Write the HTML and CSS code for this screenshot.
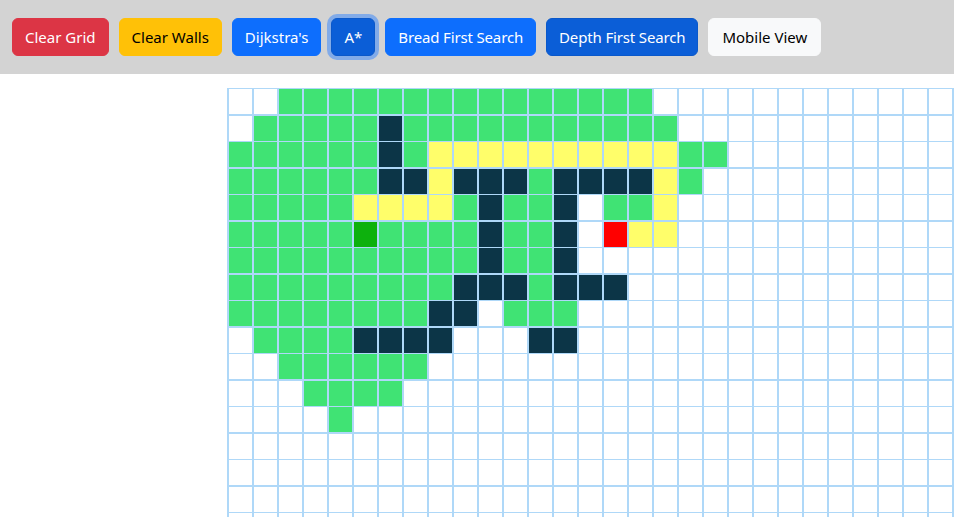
FILE: index.html
```html
<!DOCTYPE html>
<html lang="en">
<head>
<meta charset="utf-8">
<title>Pathfinding Visualizer</title>
<link rel="stylesheet" href="styles.css">
</head>
<body>
<div class="toolbar">
  <button class="btn btn-danger">Clear Grid</button>
  <button class="btn btn-warning">Clear Walls</button>
  <button class="btn btn-primary">Dijkstra's</button>
  <button class="btn btn-primary btn-active">A*</button>
  <button class="btn btn-primary btn-tight">Bread First Search</button>
  <button class="btn btn-primary btn-dark-blue btn-tight">Depth First Search</button>
  <button class="btn btn-light">Mobile View</button>
</div>
<div class="board">
  <div class="grid" id="grid"></div>
</div>
<script src="script.js"></script>
</body>
</html>
```
FILE: styles.css
```css
* { box-sizing: border-box; }
html, body { margin: 0; padding: 0; overflow: hidden; background: #fff; }
body { font-family: "Noto Sans", "Segoe UI", "Liberation Sans", sans-serif; }
.toolbar {
  display: flex;
  gap: 10px;
  align-items: center;
  background: #d3d3d3;
  height: 74px;
  padding: 0 12px;
}
.btn {
  font-family: inherit;
  font-size: 15px;
  line-height: 24px;
  padding: 6px 12px;
  border: 1px solid transparent;
  border-radius: 6px;
  cursor: pointer;
  white-space: nowrap;
}
.btn-tight { letter-spacing: -0.15px; }
.btn-danger { background: #dc3545; border-color: #dc3545; color: #fff; }
.btn-warning { background: #ffc107; border-color: #ffc107; color: #000; }
.btn-primary { background: #0d6efd; border-color: #0d6efd; color: #fff; }
.btn-active { background: #0b5ed7; border-color: #0a58ca; box-shadow: 0 0 0 4px rgba(49,132,253,.5); }
.btn-dark-blue { background: #0b5ed7; border-color: #0a58ca; }
.btn-light { background: #f8f9fa; border-color: #f8f9fa; color: #000; padding: 6px 13px; }
.board {
  padding: 13.5px 0 0 227px;
}
.grid {
  display: grid;
  grid-template-columns: repeat(30, 23.5px);
  grid-auto-rows: 25px;
  gap: 1.5px;
  padding: 1.5px;
  background: #afd8f8;
  width: max-content;
}
.cell { background: #fff; }
.cell.g { background: #40e374; }
.cell.w { background: #0c3547; }
.cell.y { background: #fffe6a; }
.cell.s { background: #0db10d; }
.cell.e { background: #ff0000; }
```
FILE: script.js
```js
var rows = [
  "..ggggggggggggggg.............",
  ".gggggwggggggggggg............",
  "ggggggwgyyyyyyyyyygg..........",
  "ggggggwwywwwgwwwwyg...........",
  "gggggyyyygwggw.ggy............",
  "gggggsggggwggw.eyy............",
  "ggggggggggwggw................",
  "gggggggggwwwgwww..............",
  "ggggggggww.ggg................",
  ".ggggwwww...ww................",
  "..gggggg......................",
  "...gggg.......................",
  "....g.........................",
  "..............................",
  "..............................",
  "..............................",
  ".............................."
];
var grid = document.getElementById("grid");
rows.forEach(function (row) {
  for (var i = 0; i < row.length; i++) {
    var c = document.createElement("div");
    c.className = "cell" + (row[i] === "." ? "" : " " + row[i]);
    grid.appendChild(c);
  }
});
```
